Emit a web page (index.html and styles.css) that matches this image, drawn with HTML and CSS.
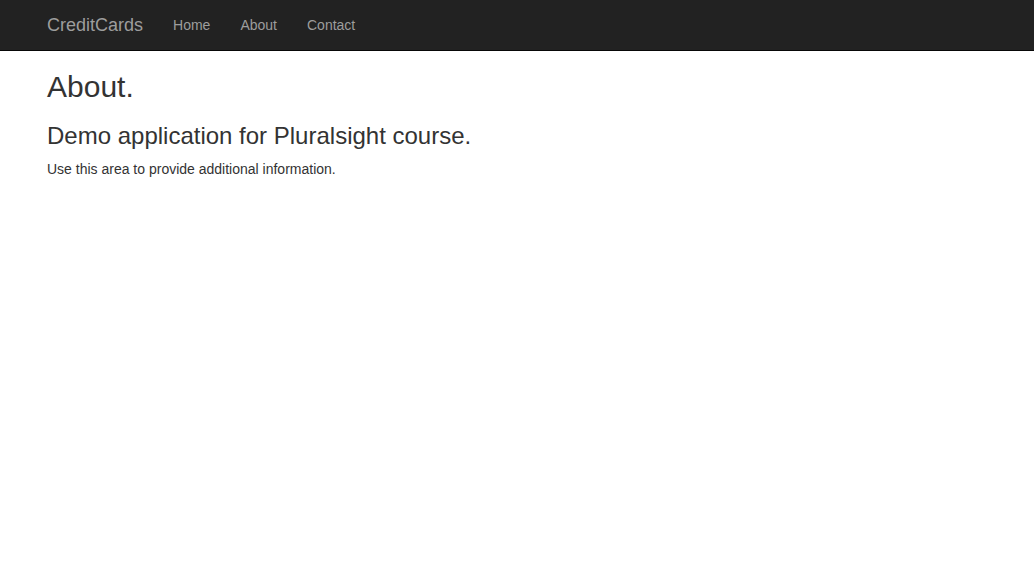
FILE: index.html
```html
<!DOCTYPE html>
<html>
<head>
<meta charset="utf-8">
<title>About - CreditCards</title>
<link rel="stylesheet" href="styles.css">
</head>
<body>
<nav class="navbar">
  <div class="container nav-inner">
    <a class="brand" href="#">CreditCards</a>
    <ul class="nav">
      <li><a href="#">Home</a></li>
      <li><a href="#">About</a></li>
      <li><a href="#">Contact</a></li>
    </ul>
  </div>
</nav>
<main class="container body-content">
  <h2 class="title">About.</h2>
  <h3 class="subtitle">Demo application for Pluralsight course.</h3>
  <p class="text">Use this area to provide additional information.</p>
</main>
</body>
</html>
```
FILE: styles.css
```css
* { box-sizing: border-box; }
html, body { margin: 0; padding: 0; }
body {
  font-family: "Liberation Sans", Arial, Helvetica, sans-serif;
  font-size: 14px;
  line-height: 1.42857143;
  color: #333;
  background: #fff;
}
.container {
  width: 970px;
  margin: 0 auto;
  padding: 0 15px;
}
.navbar {
  background: #222;
  border-bottom: 1px solid #080808;
  height: 51px;
}
.nav-inner {
  display: flex;
  align-items: stretch;
  height: 50px;
}
.brand {
  display: block;
  height: 50px;
  padding: 15px 15px;
  margin-left: -15px;
  font-size: 18px;
  line-height: 20px;
  color: #9d9d9d;
  text-decoration: none;
}
.nav {
  display: flex;
  list-style: none;
  margin: 0;
  padding: 0;
}
.nav a {
  display: block;
  padding: 15px;
  line-height: 20px;
  color: #9d9d9d;
  text-decoration: none;
}
.title {
  font-size: 30px;
  font-weight: 500;
  line-height: 1.1;
  margin: 19px 0 10px;
}
.subtitle {
  font-size: 24px;
  font-weight: 500;
  line-height: 1.1;
  margin: 20px 0 10px;
}
.text {
  margin: 0 0 10px;
}
```
